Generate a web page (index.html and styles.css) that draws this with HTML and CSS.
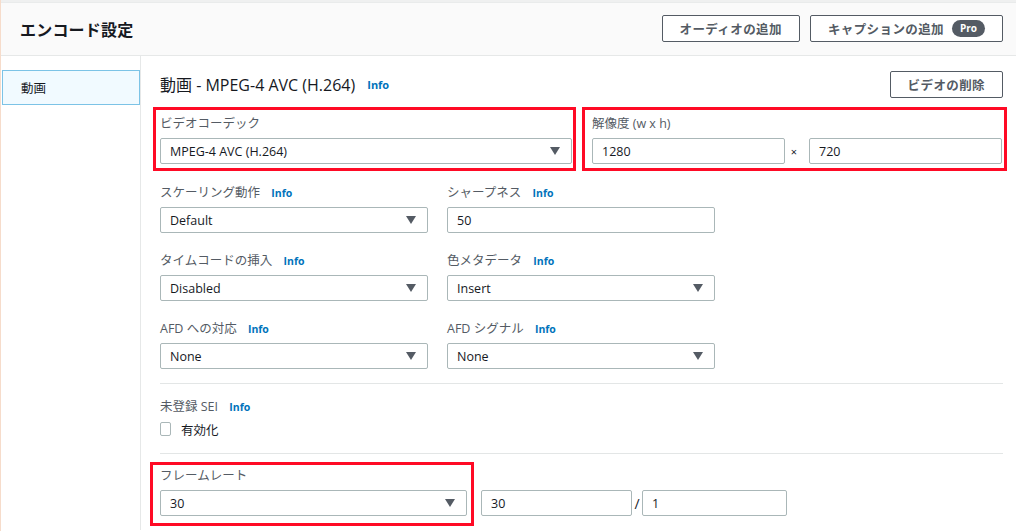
FILE: index.html
```html
<!DOCTYPE html>
<html lang="ja">
<head>
<meta charset="utf-8">
<title>エンコード設定</title>
<link rel="stylesheet" href="styles.css">
</head>
<body>
<div class="page">
  <div class="topstrip"></div>
  <header class="header">
    <h1 class="header-title">エンコード設定</h1>
    <div class="header-actions">
      <button class="btn">オーディオの追加</button>
      <button class="btn">キャプションの追加 <span class="pro">Pro</span></button>
    </div>
  </header>
  <div class="body">
    <nav class="sidebar">
      <div class="side-item">動画</div>
    </nav>
    <main class="main">
      <div class="title-row">
        <h2 class="section-title">動画 - MPEG-4 AVC (H.264) <a class="info">Info</a></h2>
        <button class="btn btn-small">ビデオの削除</button>
      </div>

      <div class="grid2">
        <div class="field">
          <span class="mark mark-a"></span>
          <div class="label">ビデオコーデック</div>
          <div class="select">MPEG-4 AVC (H.264)<span class="caret"></span></div>
        </div>
        <div class="field">
          <span class="mark mark-b"></span>
          <div class="label">解像度 (w x h)</div>
          <div class="res-row">
            <div class="input">1280</div>
            <span class="times">×</span>
            <div class="input">720</div>
          </div>
        </div>
      </div>

      <div class="grid3">
        <div class="field">
          <div class="label">スケーリング動作 <a class="info">Info</a></div>
          <div class="select">Default<span class="caret"></span></div>
        </div>
        <div class="field">
          <div class="label">シャープネス <a class="info">Info</a></div>
          <div class="input">50</div>
        </div>
        <div></div>
        <div class="field">
          <div class="label">タイムコードの挿入 <a class="info">Info</a></div>
          <div class="select">Disabled<span class="caret"></span></div>
        </div>
        <div class="field">
          <div class="label">色メタデータ <a class="info">Info</a></div>
          <div class="select">Insert<span class="caret"></span></div>
        </div>
        <div></div>
        <div class="field">
          <div class="label">AFD への対応 <a class="info">Info</a></div>
          <div class="select">None<span class="caret"></span></div>
        </div>
        <div class="field">
          <div class="label">AFD シグナル <a class="info">Info</a></div>
          <div class="select">None<span class="caret"></span></div>
        </div>
      </div>

      <hr class="divider">

      <div class="field">
        <div class="label">未登録 SEI <a class="info">Info</a></div>
        <label class="check"><span class="box"></span>有効化</label>
      </div>

      <hr class="divider divider-2">

      <div class="fr-row">
        <div class="field fr-field">
          <span class="mark mark-c"></span>
          <div class="label">フレームレート</div>
          <div class="select">30<span class="caret"></span></div>
        </div>
        <div class="fr-inputs">
          <div class="input fr-num">30</div>
          <span class="slash">/</span>
          <div class="input fr-den">1</div>
        </div>
      </div>
    </main>
  </div>
</div>
</body>
</html>
```

FILE: styles.css
```css
* { box-sizing: border-box; }

html, body {
  margin: 0;
  padding: 0;
  background: #ffffff;
}

body {
  font-family: "Open Sans", "Noto Sans CJK JP", sans-serif;
  font-size: 12.5px;
  color: #16191f;
}

.page {
  width: 1016px;
  height: 531px;
  overflow: hidden;
  border-left: 1px solid #f6dccb;
}

.topstrip {
  height: 3px;
  background: #eff0f0;
  border-bottom: 1px solid #e9ebeb;
}

.header {
  height: 53px;
  background: #fafafa;
  border-bottom: 1px solid #e6e8e8;
  display: flex;
  align-items: center;
  justify-content: space-between;
  padding: 0 13px 0 19px;
}

.header-title {
  margin: 0;
  font-size: 16px;
  font-weight: 700;
  color: #16191f;
  letter-spacing: 0.2px;
}

.header-actions {
  display: flex;
  gap: 10px;
  margin-top: -1px;
}

.btn {
  font-family: inherit;
  height: 27px;
  padding: 0 17px;
  background: #ffffff;
  border: 1px solid #545b64;
  border-radius: 2px;
  font-size: 12.5px;
  font-weight: 700;
  color: #545b64;
  display: inline-flex;
  align-items: center;
  gap: 8px;
  letter-spacing: 0.4px;
}

.pro {
  display: inline-block;
  background: #545b64;
  color: #ffffff;
  font-size: 10px;
  font-weight: 700;
  border-radius: 9px;
  padding: 1px 8px;
  line-height: 15px;
  letter-spacing: 0;
}

.body {
  display: flex;
  height: 474px;
}

.sidebar {
  width: 140px;
  border-right: 1px solid #e6e8e8;
  padding-top: 14px;
  flex: none;
}

.side-item {
  margin-left: 1px;
  height: 35px;
  border: 1px solid #7cc3e6;
  background: #f1faff;
  display: flex;
  align-items: center;
  padding-left: 18px;
  font-size: 12.5px;
}

.main {
  flex: 1;
  padding: 14px 13px 0 19px;
}

.title-row {
  display: flex;
  justify-content: space-between;
  align-items: center;
  height: 28px;
  margin-bottom: 16px;
}

.section-title {
  margin: 0;
  font-size: 16px;
  font-weight: 400;
  color: #16191f;
  display: flex;
  align-items: center;
}

.section-title .info {
  margin-left: 12px;
  font-size: 11px;
}

.btn-small {
  padding: 0 17px;
}

.info {
  color: #0073bb;
  font-weight: 700;
  font-size: 10.5px;
  margin-left: 8px;
  font-family: "Open Sans", sans-serif;
}

.field {
  position: relative;
}

.label {
  height: 19px;
  line-height: 18px;
  padding-top: 1px;
  margin-bottom: 5px;
  color: #545b64;
  font-size: 12.5px;
  white-space: nowrap;
}

.select,
.input {
  height: 26px;
  border: 1px solid #aab7b8;
  border-radius: 2px;
  background: #ffffff;
  display: flex;
  align-items: center;
  padding-left: 9px;
  font-size: 12.5px;
  color: #16191f;
  position: relative;
}

.select {
  justify-content: space-between;
  padding-right: 11px;
}

.caret {
  width: 0;
  height: 0;
  border-left: 5.5px solid transparent;
  border-right: 5.5px solid transparent;
  border-top: 8px solid #545b64;
}

.grid2 {
  display: grid;
  grid-template-columns: 412px 410px;
  column-gap: 20px;
  margin-bottom: 19px;
}

.res-row {
  display: flex;
  align-items: center;
}

.res-row .input {
  flex: 1;
}

.times {
  width: 24px;
  padding-right: 6px;
  text-align: center;
  font-size: 11px;
  color: #16191f;
}

.grid3 {
  display: grid;
  grid-template-columns: 268px 268px 268px;
  column-gap: 19px;
  row-gap: 18px;
}

.divider {
  border: none;
  border-top: 1px solid #e3e6e6;
  margin: 14px 0 13px 0;
  height: 0;
}

.divider-2 {
  margin: 15px 0 12px 0;
}

.check {
  display: flex;
  align-items: center;
  height: 18px;
  margin-top: -1px;
  color: #16191f;
}

.box {
  width: 11px;
  height: 14px;
  border: 1px solid #aab7b8;
  border-radius: 2px;
  margin-right: 10px;
  background: #fff;
}

.fr-row {
  display: flex;
  align-items: flex-end;
}

.fr-field {
  width: 307px;
}

.fr-inputs {
  display: flex;
  align-items: center;
  margin-left: 14px;
}

.fr-num {
  width: 151px;
}

.fr-den {
  width: 145px;
}

.slash {
  width: 10px;
  text-align: center;
  font-size: 14px;
}

/* red annotation frames drawn over the fields */
.mark {
  position: absolute;
  border: 3px solid #ff0a25;
  pointer-events: none;
}

.mark-a {
  top: -7px;
  left: -7px;
  right: -4px;
  bottom: -7px;
}

.mark-b {
  top: -7px;
  left: -10px;
  right: -5px;
  bottom: -7px;
}

.mark-c {
  top: -4px;
  left: -10px;
  right: -7px;
  bottom: -10px;
}
```
